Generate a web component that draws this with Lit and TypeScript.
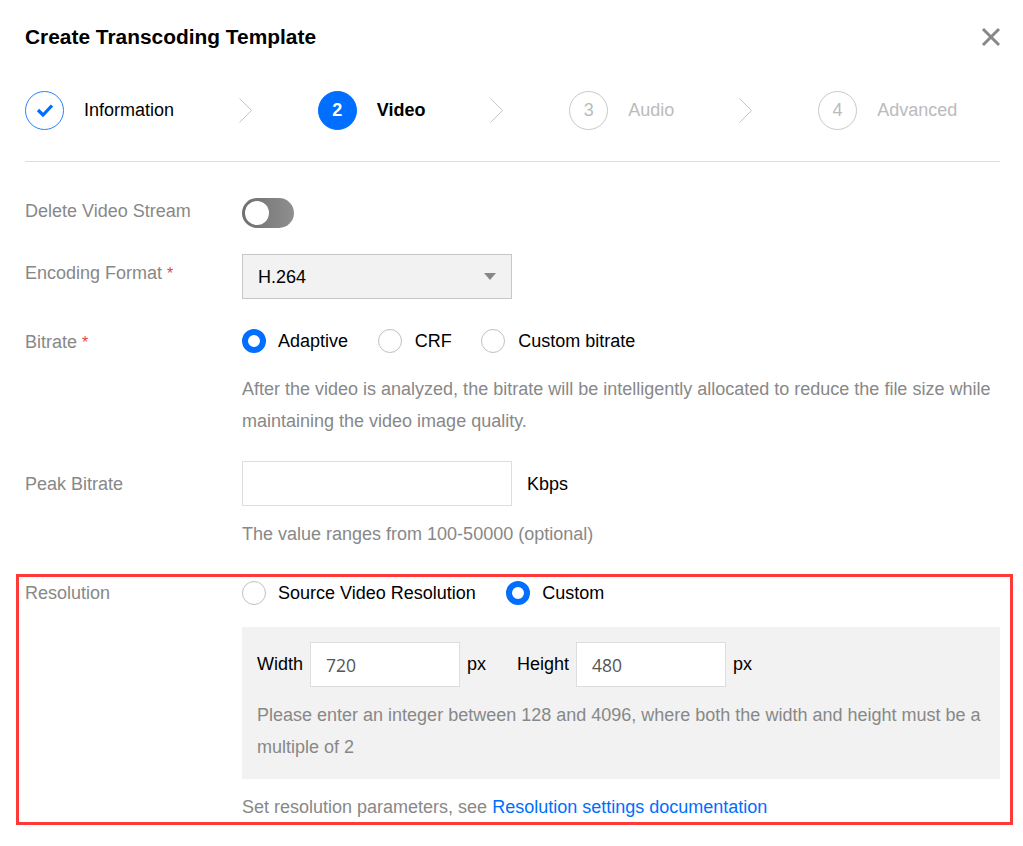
import { LitElement, html, css } from "lit";
import { customElement } from "lit/decorators.js";

const chevron = html`<svg class="chev" width="13" height="25" viewBox="0 0 13 25"><path d="M0.5 0.5 L12.5 12.5 L0.5 24.5" fill="none" stroke="#c4c4c4" stroke-width="1"/></svg>`;

@customElement("app-root")
export class AppRoot extends LitElement {
  static styles = css`
    :host { display: block; position: relative; width: 1023px; height: 846px; background: #fff; overflow: hidden;
      font-family: "Liberation Sans", Arial, sans-serif; font-size: 18px; color: #000; }
    * { box-sizing: border-box; }
    .dialog { padding: 24px 23px 0 25px; display: flex; flex-direction: column; }
    .head { display: flex; justify-content: space-between; align-items: center; height: 26px; }
    .title { font-size: 20.9px; font-weight: 700; line-height: 26px; }
    .close { display: block; margin-right: -1px; }
    .stepper { display: flex; align-items: center; gap: 65.4px; margin-top: 40px; height: 40px; }
    .step { display: flex; align-items: center; gap: 20px; }
    .circle { width: 39px; height: 39px; border-radius: 50%; display: flex; align-items: center; justify-content: center; font-size: 18px; border: 1px solid #c9c9c9; color: #bbb; }
    .step.todo { color: #bbb; }
    .step.done .circle { border-color: #2a80ff; }
    .step.active { font-weight: 700; }
    .step.active .circle { background: #006eff; border-color: #006eff; color: #fff; }
    .chev { display: block; margin: 0 0.6px 0 -0.6px; }
    hr { border: 0; border-top: 1px solid #ddd; margin: 31px 0 0; height: 1px; }
    .row { display: grid; grid-template-columns: 217px 1fr; }
    .row.first { margin-top: 36px; }
    .row.format { margin-top: 26px; }
    .row.bitrate { margin-top: 30px; }
    .row.peak { margin-top: 24px; }
    .row.res { margin-top: 31px; }
    .label { color: #888; line-height: 26px; }
    .format .label { padding-top: 6px; }
    .peak .label { line-height: 47px; }
    .res .label { line-height: 24px; }
    .star { color: #e54545; font-size: 16px; }
    .toggle { width: 52px; height: 30px; border-radius: 15px; background: linear-gradient(90deg, #6f6f6f, #8f8f8f); padding: 3px 0 0 3px; }
    .knob { width: 24px; height: 24px; border-radius: 50%; background: #fff; display: block; }
    .select { width: 270px; height: 45px; border: 1px solid #c6c6c6; background: #f2f2f2; display: flex; align-items: center; justify-content: space-between; padding: 2px 15px 0; }
    .caret { width: 0; height: 0; margin-top: -2px; border-left: 6px solid transparent; border-right: 6px solid transparent; border-top: 7px solid #888; }
    .radios { display: flex; gap: 30px; height: 24px; align-items: center; }
    .radio { display: flex; align-items: center; gap: 12px; }
    .radio.crf { gap: 12.8px; }
    .radio.custom { gap: 12.8px; margin-left: -0.5px; }
    .radio.plain { gap: 12.4px; }
    .dot { width: 24px; height: 24px; border-radius: 50%; border: 1px solid #c0c0c0; background: #fff; display: block; }
    .dot.on { border: 6px solid #006eff; }
    .help { color: #888; line-height: 32px; }
    .help.gap20 { margin-top: 20px; }
    .help.gap12 { margin-top: 12px; }
    .input { background: #fff; border: 1px solid #ddd; height: 45px; display: flex; align-items: center; padding: 0 15px; }
    .input.wide { width: 270px; }
    .inline { display: flex; align-items: center; gap: 15px; }
    .kbps { padding-top: 2px; }
    .panel { background: #f2f2f2; margin-top: 22px; padding: 15px 15px 16px; height: 152px; }
    .dims { display: flex; align-items: center; gap: 7px; }
    .num { width: 150px; padding-top: 1px; font-family: "Open Sans", sans-serif; font-size: 17.5px; color: #555; }
    .second { margin-left: 24px; }
    .link { color: #006eff; }
    .frame { position: absolute; left: 16px; top: 574px; width: 997px; height: 251px; border: 3px solid #ff3838; pointer-events: none; }
  `;

  render() {
    return html`
      <div class="dialog">
        <div class="head">
          <div class="title">Create Transcoding Template</div>
          <svg class="close" width="20" height="20" viewBox="0 0 20 20"><path d="M2 2 L18 18 M18 2 L2 18" stroke="#888" stroke-width="3" fill="none"/></svg>
        </div>
        <div class="stepper">
          <div class="step done"><span class="circle"><svg width="18" height="14" viewBox="0 0 18 14"><path d="M2 7 L7 12 L16 2.5" fill="none" stroke="#006eff" stroke-width="3.2"/></svg></span>Information</div>
          ${chevron}
          <div class="step active"><span class="circle">2</span>Video</div>
          ${chevron}
          <div class="step todo"><span class="circle">3</span>Audio</div>
          ${chevron}
          <div class="step todo"><span class="circle">4</span>Advanced</div>
        </div>
        <hr />
        <div class="row first"><div class="label">Delete Video Stream</div><div class="toggle"><span class="knob"></span></div></div>
        <div class="row format"><div class="label">Encoding Format <span class="star">*</span></div><div class="select">H.264<span class="caret"></span></div></div>
        <div class="row bitrate"><div class="label">Bitrate <span class="star">*</span></div>
          <div>
            <div class="radios">
              <label class="radio"><span class="dot on"></span>Adaptive</label>
              <label class="radio crf"><span class="dot"></span>CRF</label>
              <label class="radio custom"><span class="dot"></span>Custom bitrate</label>
            </div>
            <div class="help gap20">After the video is analyzed, the bitrate will be intelligently allocated to reduce the file size while maintaining the video image quality.</div>
          </div>
        </div>
        <div class="row peak"><div class="label">Peak Bitrate</div>
          <div>
            <div class="inline"><div class="input wide"></div><span class="kbps">Kbps</span></div>
            <div class="help gap12">The value ranges from 100-50000 (optional)</div>
          </div>
        </div>
        <div class="row res"><div class="label">Resolution</div>
          <div>
            <div class="radios">
              <label class="radio"><span class="dot"></span>Source Video Resolution</label>
              <label class="radio plain"><span class="dot on"></span>Custom</label>
            </div>
            <div class="panel">
              <div class="dims">
                <span>Width</span><div class="input num">720</div><span>px</span>
                <span class="second">Height</span><div class="input num">480</div><span>px</span>
              </div>
              <div class="help gap12">Please enter an integer between 128 and 4096, where both the width and height must be a multiple of 2</div>
            </div>
            <div class="help gap12">Set resolution parameters, see <span class="link">Resolution settings documentation</span></div>
          </div>
        </div>
      </div>
      <div class="frame"></div>
    `;
  }
}
